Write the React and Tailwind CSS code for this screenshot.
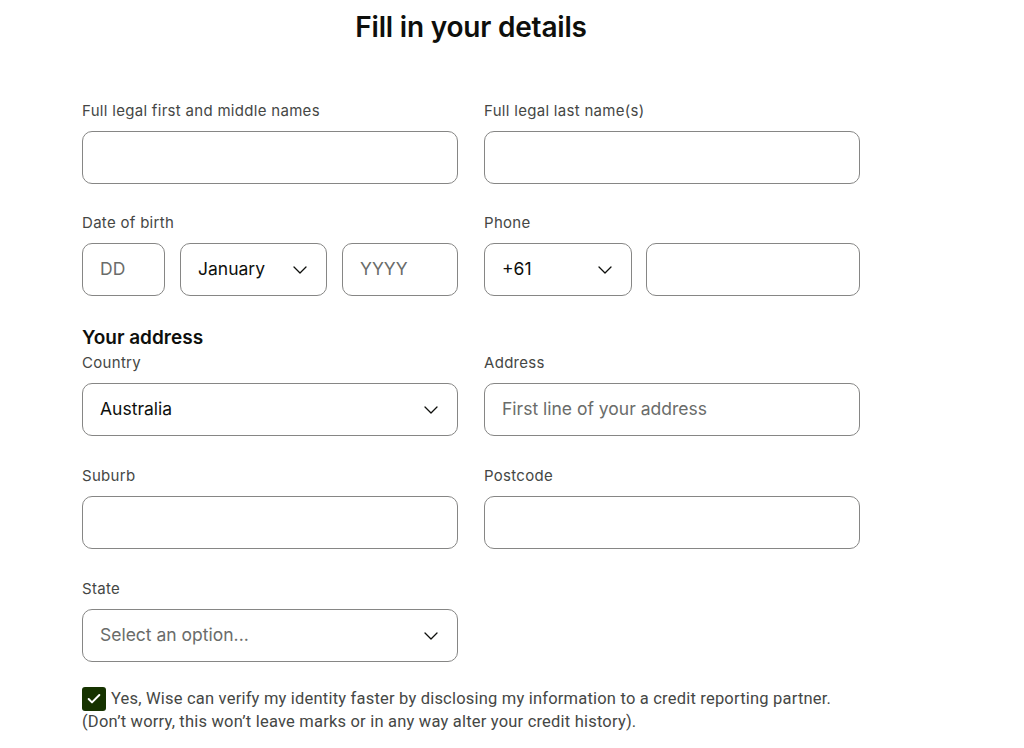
import { ChevronDown, Check } from "lucide-react";

function Label({ children }) {
  return <div className="pt-[1px] text-[15px] leading-[22px] tracking-[0.3px] text-[#454745] mb-[9px]">{children}</div>;
}

function Box({ className = "", children }) {
  return (
    <div className={`h-[53px] border border-[#868685] rounded-[10px] bg-white flex items-center px-[17px] text-[17.5px] ${className}`}>
      {children}
    </div>
  );
}

function Select({ value, placeholder, className = "" }) {
  return (
    <Box className={`justify-between pr-[14px] ${className}`}>
      <span className={value ? "text-[#0e0f0c]" : "text-[#6a6c6a]"}>{value || placeholder}</span>
      <ChevronDown className="w-[24px] h-[24px] text-[#0e0f0c]" strokeWidth={1.3} />
    </Box>
  );
}

function App() {
  return (
    <div className="min-h-screen bg-white font-['Inter',sans-serif] text-[#0e0f0c]">
      <div className="ml-[82px] w-[778px] pb-6">
        <h1 className="text-[28px] leading-[54px] font-semibold text-center tracking-[-0.2px]">Fill in your details</h1>

        <div className="grid grid-cols-2 gap-x-[26px] mt-[45px]">
          <div>
            <Label>Full legal first and middle names</Label>
            <Box />
          </div>
          <div>
            <Label>Full legal last name(s)</Label>
            <Box />
          </div>
        </div>

        <div className="grid grid-cols-2 gap-x-[26px] mt-[27px]">
          <div>
            <Label>Date of birth</Label>
            <div className="flex gap-[15px]">
              <Box className="w-[83px] text-[#6a6c6a]">DD</Box>
              <Select value="January" className="w-[147px]" />
              <Box className="flex-1 text-[#6a6c6a]">YYYY</Box>
            </div>
          </div>
          <div>
            <Label>Phone</Label>
            <div className="flex gap-[14px]">
              <Select value="+61" className="w-[148px]" />
              <Box className="flex-1" />
            </div>
          </div>
        </div>

        <h2 className="mt-[29px] text-[19px] leading-[26px] font-semibold">Your address</h2>

        <div className="grid grid-cols-2 gap-x-[26px] gap-y-[28px]">
          <div>
            <Label>Country</Label>
            <Select value="Australia" />
          </div>
          <div>
            <Label>Address</Label>
            <Box className="text-[#6a6c6a]">First line of your address</Box>
          </div>
          <div>
            <Label>Suburb</Label>
            <Box />
          </div>
          <div>
            <Label>Postcode</Label>
            <Box />
          </div>
          <div>
            <Label>State</Label>
            <Select placeholder="Select an option..." />
          </div>
        </div>

        <div className="mt-[25px] font-['Roboto',sans-serif] text-[16.5px] leading-[22px] tracking-[0.2px] text-[#454745]">
          <div className="flex items-center h-[24px] gap-[5px]">
            <span className="flex items-center justify-center w-[24px] h-[24px] rounded-[3px] bg-[#163300]">
              <Check className="w-[16px] h-[16px] text-white" strokeWidth={3} />
            </span>
            <span>Yes, Wise can verify my identity faster by disclosing my information to a credit reporting partner.</span>
          </div>
          <div>(Don’t worry, this won’t leave marks or in any way alter your credit history).</div>
        </div>
      </div>
    </div>
  );
}

export default App;
